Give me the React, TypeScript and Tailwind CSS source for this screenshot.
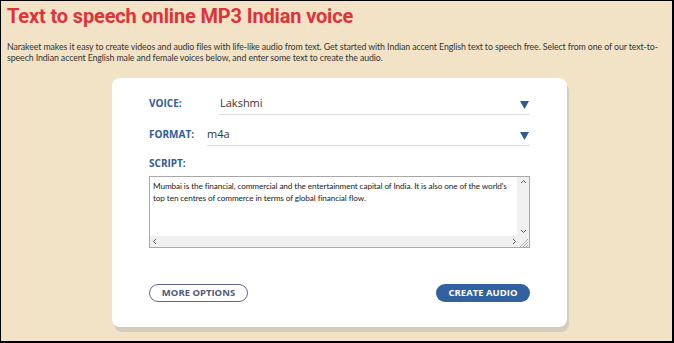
import React from "react";

const lbl = { fontFamily: "'Open Sans', sans-serif" };

export default function App() {
  return (
    <div className="w-[674px] h-[343px] overflow-hidden bg-[#f2e3c7] border-t border-l border-r-2 border-b-2 border-black" style={{ fontFamily: "Lato, 'Open Sans', sans-serif" }}>
      <h1 className="ml-[6px] mt-[3px] text-[20px] leading-[24px] font-bold text-[#df3339]" style={{ fontFamily: "Roboto, sans-serif", letterSpacing: "-0.15px" }}>
        Text to speech online MP3 Indian voice
      </h1>
      <p className="mx-[6px] mt-[13px] text-[8.8px] leading-[11px] text-[#333]" style={{ fontFamily: "Lato, sans-serif", letterSpacing: "-0.1px" }}>
        Narakeet makes it easy to create videos and audio files with life-like audio from text. Get started with Indian accent English text to speech free. Select from one of our text-to-speech Indian accent English male and female voices below, and enter some text to create the audio.
      </p>
      <div className="ml-[111px] mt-[15px] w-[455px] h-[249px] bg-white rounded-[8px] shadow-[2px_5px_0_#d4ccbd] pt-[15px] px-[37px]">
        <div className="flex items-start h-[22px]">
          <span className="w-[70px] h-[20px] flex items-center text-[10px] font-bold text-[#2f5c98]" style={lbl}>VOICE:</span>
          <div className="flex-1 flex items-start justify-between border-b border-[#ddd] h-[22px]">
            <span className="h-[20px] flex items-center text-[11px] text-[#333] pl-[1px]" style={lbl}>Lakshmi</span>
            <svg width="9" height="8" viewBox="0 0 9 8" className="mr-[1px] mt-[8px]"><path d="M0 0H9L4.5 8Z" fill="#2f5c98" /></svg>
          </div>
        </div>
        <div className="flex items-start h-[22px] mt-[9px]">
          <span className="w-[58px] h-[20px] flex items-center text-[10px] font-bold text-[#2f5c98]" style={lbl}>FORMAT:</span>
          <div className="flex-1 flex items-start justify-between border-b border-[#ddd] h-[22px]">
            <span className="h-[20px] flex items-center text-[11px] text-[#333]" style={lbl}>m4a</span>
            <svg width="9" height="8" viewBox="0 0 9 8" className="mr-[1px] mt-[8px]"><path d="M0 0H9L4.5 8Z" fill="#2f5c98" /></svg>
          </div>
        </div>
        <div className="mt-[11px] text-[10px] font-bold text-[#2f5c98] leading-[12px]" style={lbl}>SCRIPT:</div>
        <div className="mt-[7px] h-[72px] border border-[#a9a9a9] flex flex-col">
          <div className="flex flex-1">
            <div className="flex-1 pl-[3px] pr-0 pt-[3px] text-[8.2px] leading-[12px] text-[#222]" style={{ fontFamily: "Lato, sans-serif", letterSpacing: "-0.1px" }}>
              Mumbai is the financial, commercial and the entertainment capital of India. It is also one of the world's top ten centres of commerce in terms of global financial flow.
            </div>
            <div className="w-[12px] bg-[#f0f0f0] flex flex-col justify-between items-center text-[#555] py-[2px]">
              <svg width="7" height="5" viewBox="0 0 7 5"><path d="M1 4L3.5 1.5L6 4" stroke="#555" strokeWidth="1" fill="none" /></svg>
              <svg width="7" height="5" viewBox="0 0 7 5"><path d="M1 1L3.5 3.5L6 1" stroke="#555" strokeWidth="1" fill="none" /></svg>
            </div>
          </div>
          <div className="h-[11px] bg-[#f0f0f0] flex items-center justify-between pl-[2px]">
            <svg width="5" height="7" viewBox="0 0 5 7"><path d="M4 1L1.5 3.5L4 6" stroke="#555" strokeWidth="1" fill="none" /></svg>
            <div className="flex items-center">
              <svg width="5" height="7" viewBox="0 0 5 7"><path d="M1 1L3.5 3.5L1 6" stroke="#555" strokeWidth="1" fill="none" /></svg>
              <svg width="12" height="11" viewBox="0 0 12 11"><path d="M11 3L3 11M11 6L6 11M11 9L9 11" stroke="#999" strokeWidth="0.8" /></svg>
            </div>
          </div>
        </div>
        <div className="mt-[36px] flex justify-between">
          <button className="w-[99px] h-[18px] rounded-full border border-[#5c6890] text-[9.5px] font-bold text-[#4f5a78] leading-[16px]" style={lbl}>MORE OPTIONS</button>
          <button className="w-[94px] h-[18px] rounded-full bg-[#3261a0] text-[9.5px] font-bold text-white leading-[18px]" style={lbl}>CREATE AUDIO</button>
        </div>
      </div>
    </div>
  );
}
